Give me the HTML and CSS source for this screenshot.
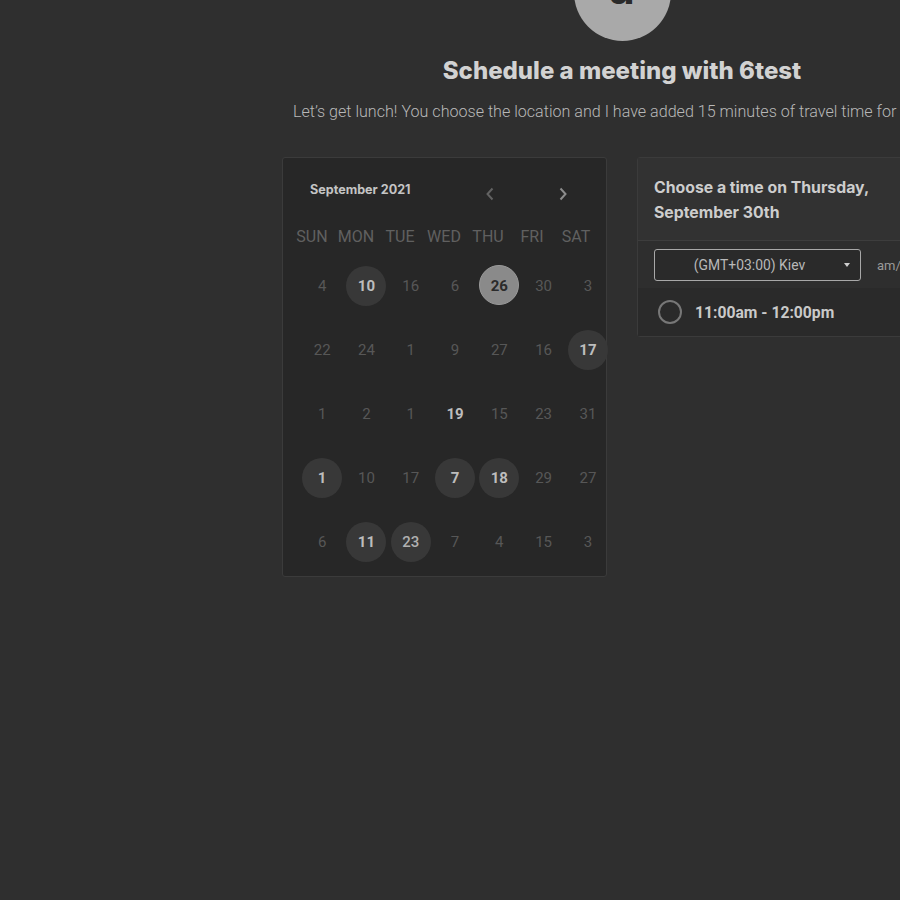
FILE: index.html
```html
<!DOCTYPE html>
<html>
<head>
<meta charset="utf-8">
<link rel="stylesheet" href="styles.css">
</head>
<body>
<div class="page">
  <div class="avatar"><span>a</span></div>
  <h1 class="title">Schedule a meeting with 6test</h1>
  <p class="desc">Let’s get lunch! You choose the location and I have added 15 minutes of travel time for us.</p>
  <div class="row">
    <div class="calendar">
      <div class="cal-head">
        <div class="month">September 2021</div>
        <button class="nav prev"><svg width="10" height="14" viewBox="0 0 10 14"><path d="M7.5 1.5 2.5 7l5 5.5" fill="none" stroke="currentColor" stroke-width="2"/></svg></button>
        <button class="nav next"><svg width="10" height="14" viewBox="0 0 10 14"><path d="M2.5 1.5 7.5 7l-5 5.5" fill="none" stroke="currentColor" stroke-width="2"/></svg></button>
      </div>
      <div class="weekdays">
        <span>SUN</span><span>MON</span><span>TUE</span><span>WED</span><span>THU</span><span>FRI</span><span>SAT</span>
      </div>
      <div class="days">
        <span class="d">4</span><span class="d on">10</span><span class="d">16</span><span class="d">6</span><span class="d sel">26</span><span class="d">30</span><span class="d">3</span>
        <span class="d">22</span><span class="d">24</span><span class="d">1</span><span class="d">9</span><span class="d">27</span><span class="d">16</span><span class="d on">17</span>
        <span class="d">1</span><span class="d">2</span><span class="d">1</span><span class="d bold">19</span><span class="d">15</span><span class="d">23</span><span class="d">31</span>
        <span class="d on">1</span><span class="d">10</span><span class="d">17</span><span class="d on">7</span><span class="d on">18</span><span class="d">29</span><span class="d">27</span>
        <span class="d">6</span><span class="d on">11</span><span class="d on light">23</span><span class="d">7</span><span class="d">4</span><span class="d">15</span><span class="d">3</span>
      </div>
    </div>
    <div class="times">
      <div class="times-head">Choose a time on Thursday, September 30th</div>
      <div class="tz-row">
        <div class="tz-select"><span class="tz-text">(GMT+03:00) Kiev</span><span class="caret"></span></div>
        <span class="ampm">am/pm</span>
      </div>
      <div class="slot">
        <span class="radio"></span>
        <span class="slot-text">11:00am - 12:00pm</span>
      </div>
    </div>
  </div>
</div>
</body>
</html>
```
FILE: styles.css
```css
html, body {
  margin: 0;
  padding: 0;
  background: #2f2f2f;
  overflow: hidden;
  width: 900px;
  height: 900px;
}
.page {
  margin-left: 282px;
  width: 680px;
}
.avatar {
  width: 97px;
  height: 97px;
  border-radius: 50%;
  background: #a9a9a9;
  margin: -56px auto 0;
  display: flex;
  justify-content: center;
  align-items: flex-start;
  overflow: hidden;
}
.avatar span {
  font-family: Inter, sans-serif;
  font-weight: 700;
  font-size: 44px;
  line-height: 44px;
  margin-top: 22px;
  color: #2a2a2a;
}
.title {
  margin: 15px 0 0;
  font-family: Inter, sans-serif;
  font-weight: 800;
  font-size: 24px;
  line-height: 30px;
  text-align: center;
  color: #d2d2d2;
}
.desc {
  margin: 16px 0 0;
  padding-left: 11px;
  font-family: Roboto, sans-serif;
  font-weight: 300;
  font-size: 16.1px;
  line-height: 20px;
  color: #b8b8b8;
  white-space: nowrap;
}
.row {
  margin-top: 35px;
  display: flex;
  align-items: flex-start;
  gap: 30px;
  width: 1000px;
}
.calendar {
  box-sizing: border-box;
  width: 325px;
  height: 420px;
  border: 1px solid #3b3b3b;
  border-radius: 3px;
  background: #272727;
  flex: none;
}
.cal-head {
  display: flex;
  align-items: center;
  padding: 24px 31px 0 27px;
  height: 16px;
}
.month {
  flex: 1;
  font-family: Inter, sans-serif;
  font-weight: 700;
  font-size: 12.6px;
  line-height: 16px;
  color: #c4c4c4;
}
.nav {
  width: 24px;
  height: 24px;
  padding: 0;
  border: 0;
  background: none;
  display: flex;
  align-items: center;
  justify-content: center;
  margin-top: 8px;
}
.prev { color: #626262; }
.next { color: #8c8c8c; margin-left: 49px; }
.weekdays {
  margin-top: 26px;
  padding-left: 7px;
  display: grid;
  grid-template-columns: repeat(7, 44px);
  height: 24px;
  align-items: center;
}
.weekdays span {
  text-align: center;
  font-family: Roboto, sans-serif;
  font-size: 16px;
  color: #606060;
}
.days {
  margin-top: 6px;
  padding-left: 17px;
  display: grid;
  grid-template-columns: repeat(7, 44.3px);
  grid-auto-rows: 64px;
}
.d {
  display: flex;
  align-items: center;
  justify-content: center;
  font-family: Roboto, sans-serif;
  font-size: 15px;
  color: #575757;
  position: relative;
  z-index: 0;
}
.d.on, .d.sel { isolation: isolate; }
.d.on::before, .d.sel::before {
  content: "";
  position: absolute;
  width: 40px;
  height: 40px;
  border-radius: 50%;
  background: #383838;
  left: 50%;
  top: 50%;
  transform: translate(-50%, -50%);
  z-index: -1;
}
.d.on, .d.bold {
  color: #bdbdbd;
  font-weight: 700;
}
.d.light { font-weight: 500; color: #b0b0b0; }
.d.sel {
  color: #2b2b2b;
  font-weight: 700;
}
.d.sel::before {
  background: #8a8a8a;
  border: 1px solid #9a9a9a;
  box-sizing: border-box;
  margin-top: -1px;
}
.times {
  box-sizing: border-box;
  width: 320px;
  border: 1px solid #3b3b3b;
  border-radius: 3px;
  background: #2a2a2a;
  flex: none;
}
.times-head {
  padding: 17px 60px 15px 16px;
  background: #323232;
  border-bottom: 1px solid #3d3d3d;
  font-family: Inter, sans-serif;
  font-weight: 700;
  font-size: 15.8px;
  line-height: 25px;
  color: #cdcdcd;
}
.tz-row {
  display: flex;
  align-items: center;
  padding: 8px 16px 7px;
  background: #2e2e2e;
}
.tz-select {
  box-sizing: border-box;
  width: 207px;
  height: 32px;
  border: 1px solid #a8a8a8;
  border-radius: 3px;
  background: #2a2a2a;
  display: flex;
  align-items: center;
}
.tz-text {
  flex: 1;
  text-align: center;
  padding-left: 0;
  font-family: Roboto, sans-serif;
  font-size: 13.9px;
  color: #b8b8b8;
}
.caret {
  width: 0;
  height: 0;
  border-left: 3.5px solid transparent;
  border-right: 3.5px solid transparent;
  border-top: 4px solid #cfcfcf;
  margin-right: 10px;
}
.ampm {
  margin-left: 16px;
  font-family: Roboto, sans-serif;
  font-size: 13px;
  color: #9a9a9a;
}
.slot {
  display: flex;
  align-items: center;
  height: 48px;
  padding-left: 20px;
  background: #2a2a2a;
}
.radio {
  box-sizing: border-box;
  width: 24px;
  height: 24px;
  border: 2px solid #777;
  border-radius: 50%;
}
.slot-text {
  margin-left: 13px;
  font-family: Roboto, sans-serif;
  font-weight: 700;
  font-size: 15.7px;
  color: #c9c9c9;
}
```
